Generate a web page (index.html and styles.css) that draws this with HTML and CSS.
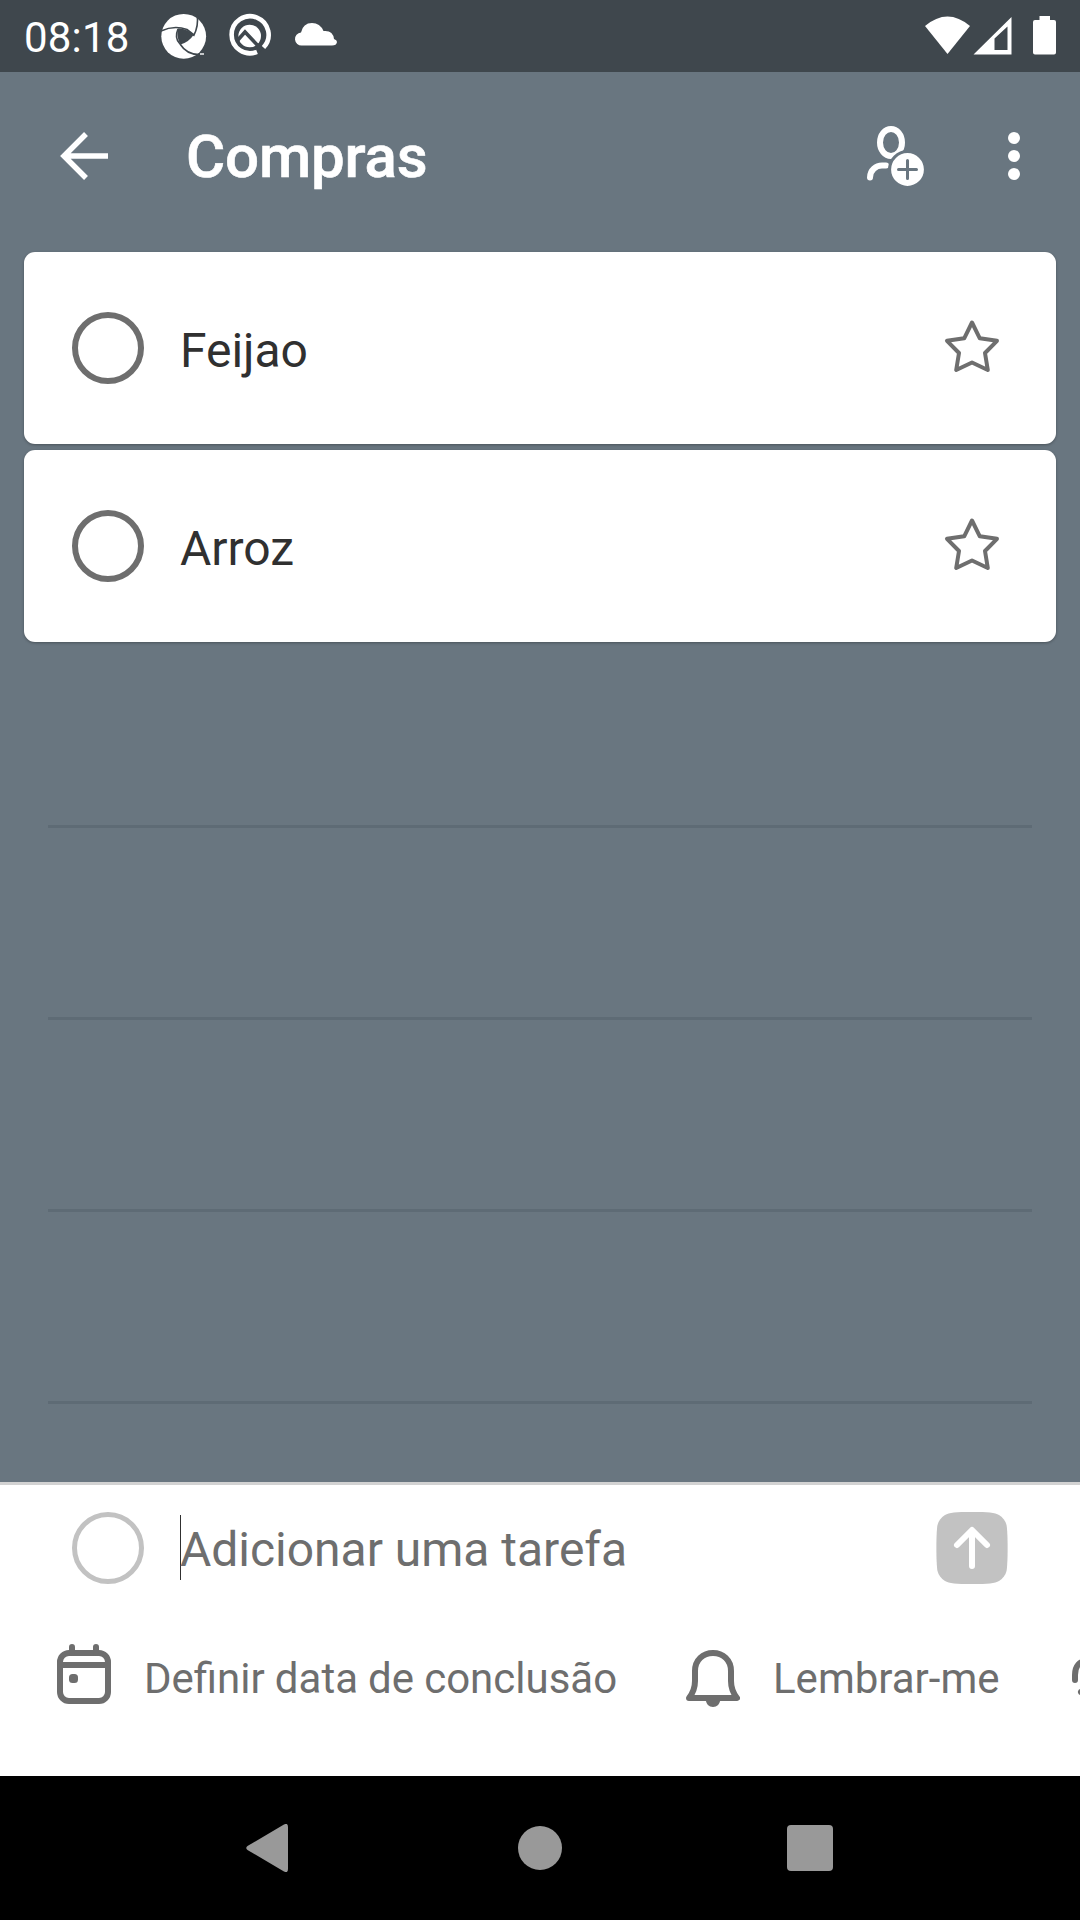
FILE: index.html
```html
<!DOCTYPE html>
<html lang="pt-BR">
<head>
<meta charset="utf-8">
<title>Compras</title>
<link rel="stylesheet" href="styles.css">
</head>
<body>
<div class="screen">
  <header class="status-bar">
    <span class="clock">08:18</span>
    <svg class="status-left" width="180" height="72" viewBox="160 0 180 72" fill="#fff">
      <circle cx="183.700" cy="36.300" r="22.400"/>
      <g fill="none" stroke="#3f474d" stroke-width="1.600">
        <path d="M161 31Q174 25 187 29.500L194 35"/>
        <path d="M197 14Q199 26 193.500 36"/>
        <path d="M200 54.500Q187 55 180 44"/>
        <path d="M178 29Q174 38 180 44"/>
      </g>
      <path d="M178 28.500Q187 28 193.500 35Q189 42 180.500 44.500Q176 37 178 28.500Z" fill="#3f474d"/>
      <path d="M200 53h4v2h-4z" opacity=".7"/>
      <path d="M257 51.900A18.500 18.500 0 1 1 263.500 47.500" fill="none" stroke="#fff" stroke-width="4.600"/>
      <circle cx="249.700" cy="36" r="11.300"/>
      <path d="M237 41L245 32L262 50" fill="none" stroke="#3f474d" stroke-width="3.600"/>
      <path d="M302 45.500a6.500 6.500 0 0 1-1-13Q303 23 312 23Q320 23 323.500 31Q333 30 334 39Q337 40 337 42Q336.500 45.500 332 45.500Z"/>
    </svg>
    <svg class="status-right" width="140" height="72" viewBox="920 0 140 72" fill="#fff">
      <path d="M925 26Q947.500 7 970 26L947.500 54Z"/>
      <path fill-rule="evenodd" d="M973.500 54.500L1011.500 17V54.500ZM994.500 38.500V50H1007.500V26.500Z"/>
      <path d="M1039.500 16H1050V20H1054q2 0 2 2V52.500q0 2-2 2H1035q-2 0-2-2V22q0-2 2-2H1039.500Z"/>
    </svg>
  </header>

  <div class="toolbar">
    <svg class="back" width="48" height="48" viewBox="0 0 48 48" fill="none" stroke="#fff" stroke-width="5.500"><path d="M48 24H4M26 2L4 24L26 46"/></svg>
    <h1>Compras</h1>
    <svg class="share" width="60" height="62" viewBox="0 0 60 62">
      <ellipse cx="25" cy="17.500" rx="11" ry="13.500" fill="none" stroke="#fff" stroke-width="6"/>
      <path d="M4 52.500C4 45 10 40.500 16 40.500H20" fill="none" stroke="#fff" stroke-width="6" stroke-linecap="round"/>
      <circle cx="41.500" cy="44.500" r="17.900" fill="#fff" stroke="#697680" stroke-width="3"/>
      <path d="M41.500 35.500V53.500M32.500 44.500H50.500" stroke="#697680" stroke-width="3" stroke-linecap="round"/>
    </svg>
    <svg class="more" width="12" height="48" viewBox="0 0 12 48" fill="#fff"><circle cx="6" cy="6" r="6"/><circle cx="6" cy="24" r="6"/><circle cx="6" cy="42" r="6"/></svg>
  </div>

  <main class="list">
    <div class="task">
      <span class="check"></span><span class="name">Feijao</span>
      <svg class="star" width="56" height="54" viewBox="0 0 56 54"><path d="M28 3.500L35.800 19.300L53 21.800L41 34L43.800 51L28 43.500L12.200 51L15 34L3 21.800L20.200 19.300Z"/></svg>
    </div>
    <div class="task">
      <span class="check"></span><span class="name">Arroz</span>
      <svg class="star" width="56" height="54" viewBox="0 0 56 54"><path d="M28 3.500L35.800 19.300L53 21.800L41 34L43.800 51L28 43.500L12.200 51L15 34L3 21.800L20.200 19.300Z"/></svg>
    </div>
    <div class="rule"></div><div class="rule"></div><div class="rule"></div><div class="rule"></div>
  </main>

  <section class="composer">
    <div class="entry">
      <span class="check light"></span>
      <span class="caret"></span>
      <span class="hint">Adicionar uma tarefa</span>
      <svg class="send" width="72" height="72" viewBox="0 0 72 72"><path d="M36 0C52 0 59 .5 63 3C67 5.500 69.500 9 70.500 13C72 20 72 52 70.500 59C69.500 63 67 66.500 63 69C59 71.500 52 72 36 72S13 71.500 9 69C5 66.500 2.500 63 1.500 59C0 52 0 20 1.500 13C2.500 9 5 5.500 9 3C13 .5 20 0 36 0Z" fill="#c2c2c2"/><path d="M36 54V18.500M21 33L36 18L51 33" fill="none" stroke="#fff" stroke-width="6" stroke-linecap="round" stroke-linejoin="round"/></svg>
    </div>
    <div class="options">
      <svg class="calendar" width="54" height="60" viewBox="0 0 54 60" fill="none" stroke="#6e6e6e" stroke-width="6"><rect x="3" y="9" width="48" height="48" rx="9"/><path d="M3 21H51"/><path d="M15 3V9M39 3V9" stroke-linecap="round"/><rect x="12" y="30" width="9" height="9" rx="3.500" fill="#6e6e6e" stroke="none"/></svg>
      <span class="option due">Definir data de conclusão</span>
      <svg class="bell" width="54" height="58" viewBox="0 0 54 58"><path d="M3 48C7 43 9 38 9 31V21C9 10 17 3 27 3S45 10 45 21V31C45 38 47 43 51 48Z" fill="none" stroke="#6e6e6e" stroke-width="6" stroke-linejoin="round"/><path d="M19.500 49C20 54 23 57 27 57S34 54 34.500 49Z" fill="#6e6e6e"/></svg>
      <span class="option remind">Lembrar-me</span>
      <svg class="repeat" width="54" height="54" viewBox="0 0 54 54" fill="none" stroke="#6e6e6e" stroke-width="6" stroke-linecap="round" stroke-linejoin="round"><path d="M3 30V25C3 16 8 11 15 11H38M18 33L9 42L18 51M9 42H38"/></svg>
    </div>
  </section>

  <nav class="nav-bar">
    <svg width="42" height="48" viewBox="0 0 42 48" fill="#999"><path d="M38 .5Q42-1.500 42 3V45Q42 49.500 38 47.500L1.500 26Q-1 24 1.500 22Z"/></svg>
    <span class="home"></span>
    <span class="recents"></span>
  </nav>
</div>
</body>
</html>
```
FILE: styles.css
```css
* { box-sizing: border-box; }
body { margin: 0; font-family: Roboto, "Liberation Sans", sans-serif; }
svg { display: block; flex: none; }
.screen { width: 1080px; height: 1920px; overflow: hidden; display: flex; flex-direction: column; background: #697680; }

.status-bar { height: 72px; flex: none; display: flex; align-items: center; background: #3f474d; color: #fff; }
.clock { width: 136px; margin-left: 24px; padding-top: 2px; font-size: 42px; letter-spacing: .2px; white-space: nowrap; }
.status-right { margin-left: auto; margin-right: 20px; }

.toolbar { height: 168px; flex: none; display: flex; align-items: center; padding: 0 60px; }
h1 { margin: 0 0 0 78px; padding-top: 2px; font-size: 60px; line-height: 70px; font-weight: 500; letter-spacing: -.15px; color: #fff; -webkit-text-stroke: .6px #fff; }
.share { margin-left: auto; margin-right: 82px; }

.list { flex: 1; padding: 12px 24px 0; overflow: hidden; }
.task { height: 192px; margin-bottom: 6px; padding: 0 56px 0 48px; display: flex; align-items: center; background: #fff; border-radius: 11px; box-shadow: 0 1px 3px rgba(0, 0, 0, .3); }
.check { width: 72px; height: 72px; flex: none; border: 6px solid #6e6e6e; border-radius: 50%; }
.name { margin-left: 36px; padding-top: 5px; font-size: 48px; line-height: 56px; letter-spacing: -.05px; color: #303030; }
.star { margin-left: auto; margin-bottom: 4px; }
.star path { fill: none; stroke: #6e6e6e; stroke-width: 4; stroke-linejoin: round; }
.rule { height: 192px; margin: 0 24px; border-bottom: 3px solid #5e6b75; }
.task + .rule { margin-top: -12px; }

.composer { height: 294px; flex: none; border-top: 3px solid #d2d2d2; background: #fff; color: #6e6e6e; }
.entry { height: 126px; display: flex; align-items: center; padding: 0 72px; }
.check.light { border: 5px solid #c2c2c2; }
.caret { width: 1px; height: 65px; margin: 0 -1px 1px 36px; background: #303030; }
.hint { font-size: 48px; line-height: 56px; padding-top: 3px; letter-spacing: -.02px; }
.send { margin-left: auto; }
.options { height: 132px; display: flex; align-items: center; padding-left: 57px; white-space: nowrap; }
.calendar { margin-bottom: 6px; }
.bell { margin-top: 3px; }
.option { font-size: 42px; line-height: 50px; padding-top: 3px; }
.due { width: 542px; margin-left: 33px; flex: none; word-spacing: -.3px; }
.remind { width: 299px; margin-left: 33px; flex: none; }

.nav-bar { height: 144px; flex: none; display: flex; align-items: center; padding-left: 246px; background: #000; }
.home { width: 44px; height: 44px; margin-left: 230px; border-radius: 50%; background: #999; }
.recents { width: 46px; height: 46px; margin-left: 225px; border-radius: 4px; background: #999; }
```
